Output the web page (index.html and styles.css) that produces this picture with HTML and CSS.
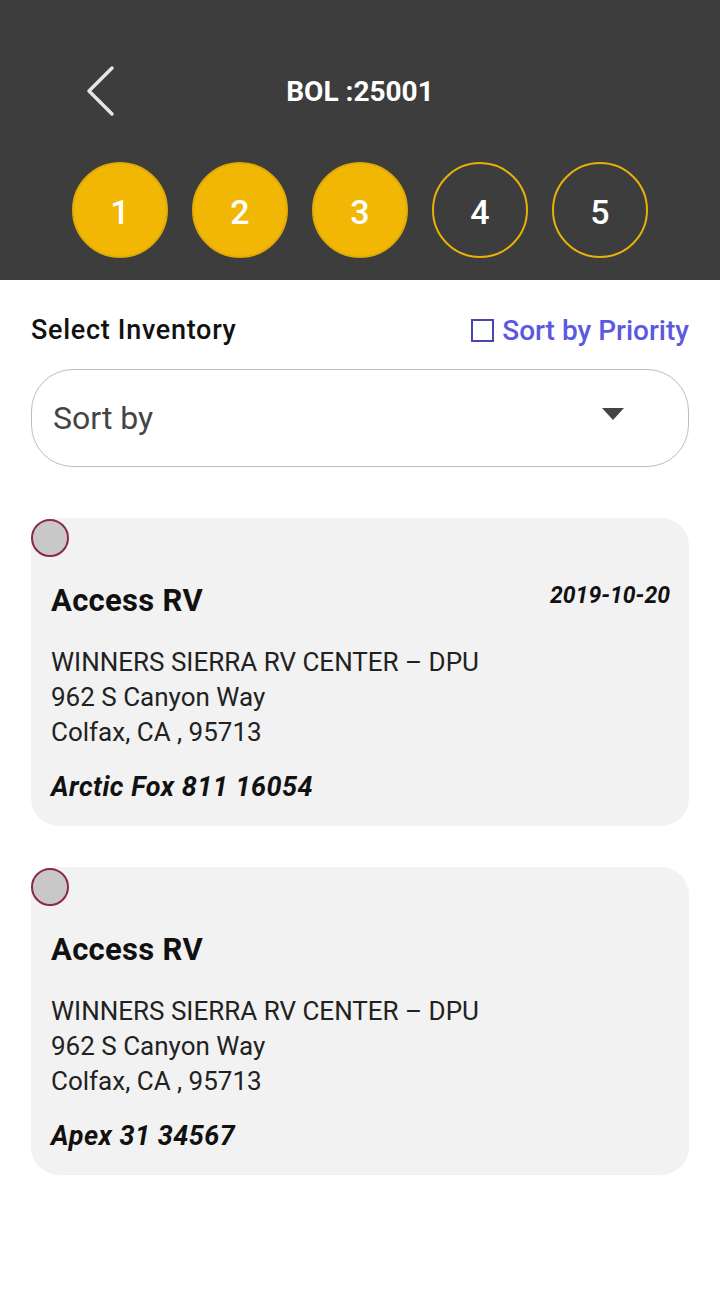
FILE: index.html
```html
<!DOCTYPE html>
<html>
<head>
<meta charset="utf-8">
<link rel="stylesheet" href="styles.css">
</head>
<body>
<div class="screen">
  <header class="header">
    <div class="topbar">
      <svg class="back" width="32" height="52" viewBox="0 0 32 52"><path d="M28 3 L5 26 L28 49" fill="none" stroke="#e6e6e6" stroke-width="3.5" stroke-linecap="round" stroke-linejoin="round"/></svg>
      <div class="title">BOL :25001</div>
    </div>
    <div class="steps">
      <div class="step done">1</div>
      <div class="step done">2</div>
      <div class="step done">3</div>
      <div class="step">4</div>
      <div class="step">5</div>
    </div>
  </header>
  <main class="content">
    <div class="row-head">
      <div class="label">Select Inventory</div>
      <div class="priority"><span class="check"></span>Sort by Priority</div>
    </div>
    <div class="select">
      <span>Sort by</span>
      <svg width="22" height="12" viewBox="0 0 22 12"><path d="M0 0 L22 0 L11 12 Z" fill="#444"/></svg>
    </div>
    <div class="cards">
      <div class="card">
        <span class="radio"></span>
        <div class="card-top">
          <div class="name">Access RV</div>
          <div class="date">2019-10-20</div>
        </div>
        <div class="addr">
          <div>WINNERS SIERRA RV CENTER – DPU</div>
          <div>962 S Canyon Way</div>
          <div>Colfax, CA , 95713</div>
        </div>
        <div class="model">Arctic Fox 811 16054</div>
      </div>
      <div class="card">
        <span class="radio"></span>
        <div class="card-top">
          <div class="name">Access RV</div>
        </div>
        <div class="addr">
          <div>WINNERS SIERRA RV CENTER – DPU</div>
          <div>962 S Canyon Way</div>
          <div>Colfax, CA , 95713</div>
        </div>
        <div class="model">Apex 31 34567</div>
      </div>
    </div>
  </main>
</div>
</body>
</html>
```

FILE: styles.css
```css
* { box-sizing: border-box; }
html, body { margin: 0; padding: 0; background: #fff; }
body { font-family: Roboto, "Noto Sans", Arial, sans-serif; width: 720px; height: 1308px; overflow: hidden; }

.header { background: #3d3d3d; height: 280px; padding-top: 65px; }
.topbar { position: relative; height: 52px; display: flex; align-items: center; justify-content: center; }
.back { position: absolute; left: 84px; top: 0; }
.title { color: #fff; font-weight: 700; font-size: 28px; }

.steps { display: flex; justify-content: center; gap: 24px; margin-top: 45px; }
.step { width: 96px; height: 96px; border-radius: 50%; border: 2px solid #e8b10a; color: #fff; font-size: 34px; font-weight: 500; display: flex; align-items: center; justify-content: center; padding-top: 3px; }
.step.done { background: #f2b705; border-color: #e0a905; }

.content { padding: 0 31px; }
.row-head { display: flex; justify-content: space-between; align-items: center; height: 40px; margin-top: 30px; }
.label { font-size: 27px; font-weight: 500; color: #111; letter-spacing: 0.7px; }
.priority { display: flex; align-items: center; font-size: 28px; font-weight: 500; color: #5b59e0; }
.check { width: 23px; height: 23px; border: 2px solid #4a46b0; margin-right: 8px; }

.select { margin-top: 19px; height: 98px; border: 1.5px solid #bdbdbd; border-radius: 42px; display: flex; align-items: center; justify-content: space-between; padding: 0 64px 0 21px; font-size: 32px; color: #444; }
.select svg { margin-top: -8px; }

.cards { display: flex; flex-direction: column; gap: 41px; margin-top: 51px; }
.card { position: relative; background: #f2f2f2; border-radius: 28px; height: 308px; padding: 63px 19px 0 20px; }
.radio { position: absolute; left: 0; top: 1px; width: 38px; height: 38px; border-radius: 50%; background: #c8c8c8; border: 2px solid #8b2a40; }
.card-top { display: flex; justify-content: space-between; align-items: flex-start; }
.name { font-size: 31px; font-weight: 700; color: #111; line-height: 40px; letter-spacing: 0.3px; }
.date { font-size: 23px; font-weight: 700; font-style: italic; color: #111; line-height: 30px; }
.addr { margin-top: 24px; font-size: 26px; color: #222; line-height: 35px; }
.model { margin-top: 20px; font-size: 27px; font-weight: 700; font-style: italic; color: #111; line-height: 34px; letter-spacing: 0.5px; }
```
